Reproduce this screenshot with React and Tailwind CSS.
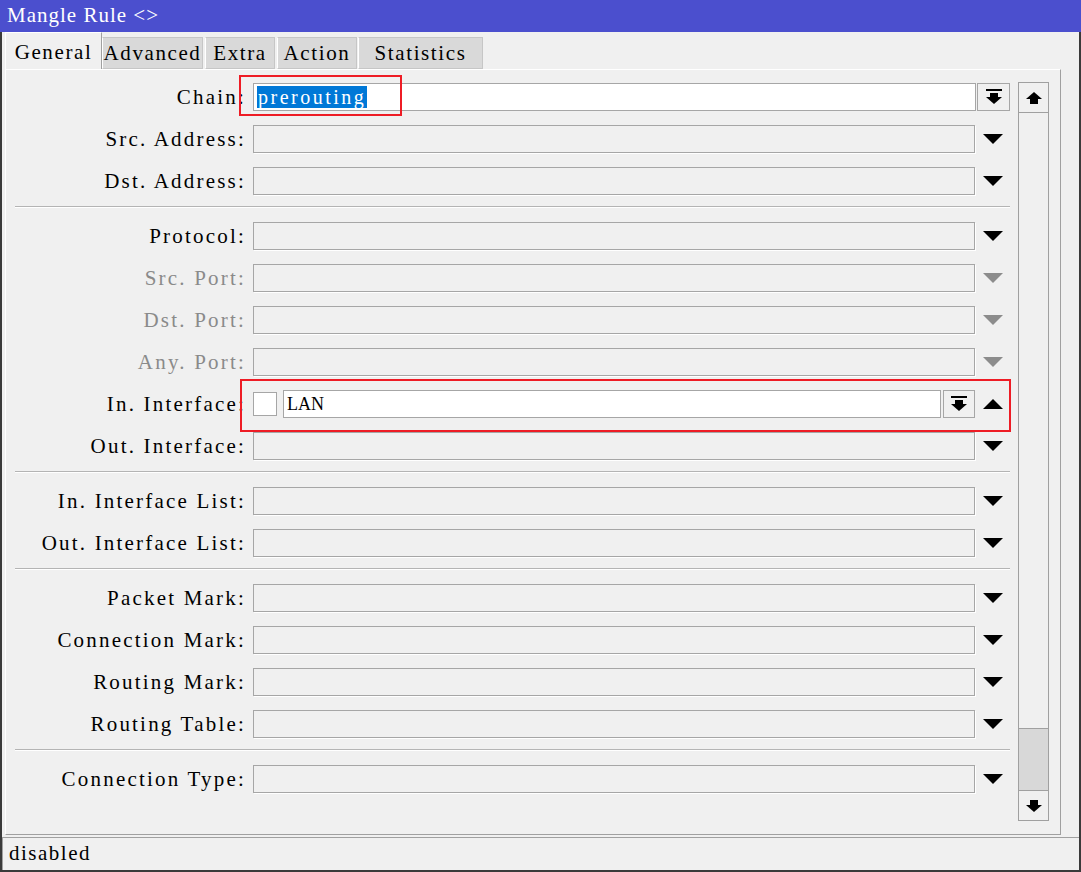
import React from 'react';

const serif = "font-['Liberation_Serif','Noto_Sans_CJK_SC',serif]";

const TriDown = ({ gray }) => (
  <svg width="20" height="10" viewBox="0 0 20 10">
    <polygon points="0,0 20,0 10,10" fill={gray ? '#8c8c8c' : '#000'} />
  </svg>
);

const TriUp = () => (
  <svg width="20" height="10" viewBox="0 0 20 10">
    <polygon points="0,10 20,10 10,0" fill="#000" />
  </svg>
);

const BarArrow = () => (
  <svg width="16" height="16" viewBox="0 0 16 16">
    <rect x="0" y="0" width="16" height="2" fill="#000" />
    <rect x="4" y="4" width="8" height="4" fill="#000" />
    <polygon points="0,8 16,8 8,15" fill="#000" />
  </svg>
);

const BlockUp = () => (
  <svg width="16" height="12" viewBox="0 0 16 12">
    <polygon points="8,0 16,7 0,7" fill="#000" />
    <rect x="4" y="7" width="8" height="5" fill="#000" />
  </svg>
);

const BlockDown = () => (
  <svg width="16" height="12" viewBox="0 0 16 12">
    <rect x="4" y="0" width="8" height="5" fill="#000" />
    <polygon points="0,5 16,5 8,12" fill="#000" />
  </svg>
);

const Row = ({ label, disabled, children }) => (
  <div className="flex h-[42px] items-center">
    <div
      className={`w-[238px] pr-[7px] text-right text-[21px] tracking-[2.2px] leading-none whitespace-nowrap ${
        disabled ? 'text-[#8a8a8a]' : 'text-black'
      }`}
    >
      {label}
    </div>
    {children}
  </div>
);

const Field = ({ disabled }) => (
  <>
    <div className="w-[722px] h-[28px] border border-[#a6a6a6] bg-[#f0f0f0] shadow-[1px_1px_0_#fff]" />
    <div className="w-[35px] flex justify-center">
      <TriDown gray={disabled} />
    </div>
  </>
);

const Sep = () => (
  <div className="h-[13px] pt-[4px]">
    <div className="border-t border-[#b4b4b4] border-b border-b-white" />
  </div>
);

export default function App() {
  return (
    <div className={`w-[1081px] h-[872px] bg-[#f0f0f0] flex flex-col overflow-hidden ${serif}`}>
      {/* title */}
      <div className="h-[32px] bg-[#4b4fce] text-white text-[21px] tracking-[1px] flex items-center pl-[7px]">
        Mangle Rule &lt;&gt;
      </div>

      <div className="flex-1 flex flex-col border-l-2 border-r-2 border-b-2 border-[#3a3a3a]">
        {/* tabs */}
        <div className="h-[37px] flex items-end pl-[3px] text-[21px] tracking-[1.6px]">
          <div className="w-[97px] h-[37px] pt-[3px] flex items-center justify-center border-t border-l border-white border-r border-r-[#a0a0a0] bg-[#f0f0f0]">
            General
          </div>
          <div className="w-[101px] h-[32px] pt-[2px] flex items-center justify-center bg-[#d9d9d9] border border-[#c6c6c6] border-l-white">
            Advanced
          </div>
          <div className="ml-[2px] w-[70px] h-[32px] pt-[2px] flex items-center justify-center bg-[#d9d9d9] border border-[#c6c6c6] border-l-white">
            Extra
          </div>
          <div className="ml-[2px] w-[80px] h-[32px] pt-[2px] flex items-center justify-center bg-[#d9d9d9] border border-[#c6c6c6] border-l-white">
            Action
          </div>
          <div className="ml-[1px] w-[125px] h-[32px] pt-[2px] flex items-center justify-center bg-[#d9d9d9] border border-[#c6c6c6] border-l-white">
            Statistics
          </div>
        </div>

        {/* panel */}
        <div className="ml-[3px] w-[1056px] h-[766px] border border-[#a0a0a0] border-t-white border-l-white flex">
          <div className="w-[1004px] pl-[9px] pt-[6px]">
            <div className="relative">
              <Row label="Chain:">
                <div className="w-[723px] h-[28px] border border-[#a6a6a6] bg-white flex items-center pl-[3px]">
                  <span className="bg-[#0078d7] text-white text-[20px] tracking-[2.5px] leading-[22px] px-[1px]">prerouting</span>
                </div>
                <div className="ml-[1px] w-[33px] h-[28px] border border-[#a6a6a6] bg-[#f0f0f0] flex items-center justify-center">
                  <BarArrow />
                </div>
              </Row>
              <div className="absolute left-[224px] top-[-1px] w-[163px] h-[41px] border-2 border-[#ee1c25]" />
            </div>
            <Row label="Src. Address:"><Field /></Row>
            <Row label="Dst. Address:"><Field /></Row>
            <Sep />
            <Row label="Protocol:"><Field /></Row>
            <Row label="Src. Port:" disabled><Field disabled /></Row>
            <Row label="Dst. Port:" disabled><Field disabled /></Row>
            <Row label="Any. Port:" disabled><Field disabled /></Row>
            <div className="relative">
              <Row label="In. Interface:">
                <div className="w-[24px] h-[24px] border border-[#a6a6a6] bg-white" />
                <div className="ml-[6px] w-[658px] h-[28px] border border-[#a6a6a6] bg-white flex items-center pl-[3px] text-[18px] leading-none">
                  LAN
                </div>
                <div className="ml-[2px] w-[32px] h-[28px] border border-[#a6a6a6] bg-[#f0f0f0] flex items-center justify-center">
                  <BarArrow />
                </div>
                <div className="w-[35px] flex justify-center">
                  <TriUp />
                </div>
              </Row>
              <div className="absolute left-[225px] top-[-4px] w-[771px] h-[53px] border-2 border-[#ee1c25]" />
            </div>
            <Row label="Out. Interface:"><Field /></Row>
            <Sep />
            <Row label="In. Interface List:"><Field /></Row>
            <Row label="Out. Interface List:"><Field /></Row>
            <Sep />
            <Row label="Packet Mark:"><Field /></Row>
            <Row label="Connection Mark:"><Field /></Row>
            <Row label="Routing Mark:"><Field /></Row>
            <Row label="Routing Table:"><Field /></Row>
            <Sep />
            <Row label="Connection Type:"><Field /></Row>
          </div>

          {/* scrollbar */}
          <div className="ml-[8px] mt-[12px] w-[31px] h-[739px] border border-[#a0a0a0] flex flex-col bg-[#f0f0f0]">
            <div className="h-[30px] border-b border-[#a0a0a0] flex items-center justify-center">
              <BlockUp />
            </div>
            <div className="flex-1" />
            <div className="h-[62px] bg-[#d8d8d8] border-t border-[#a0a0a0]" />
            <div className="h-[30px] border-t border-[#a0a0a0] flex items-center justify-center">
              <BlockDown />
            </div>
          </div>
        </div>

        {/* status */}
        <div className="mt-[2px] flex-1 border-t border-l border-[#a0a0a0] flex items-center pl-[6px] text-[21px] tracking-[1.5px]">
          disabled
        </div>
      </div>
    </div>
  );
}
